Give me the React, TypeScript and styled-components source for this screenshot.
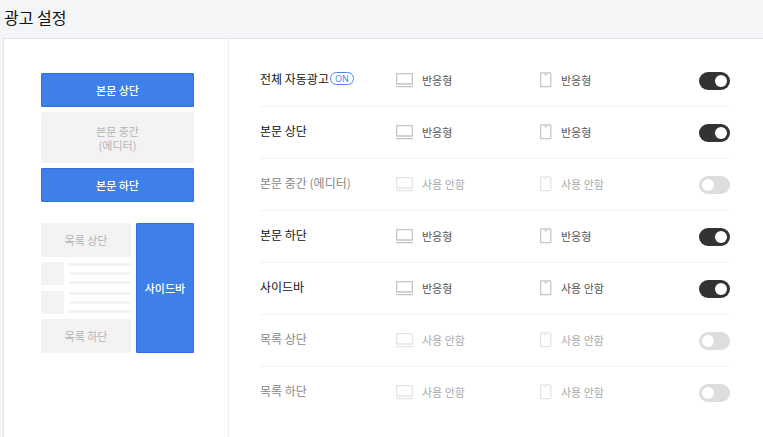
import React, { useState } from "react";
import styled, { createGlobalStyle } from "styled-components";

const GlobalStyle = createGlobalStyle`
  *, *::before, *::after { box-sizing: border-box; }
  body {
    margin: 0;
    background: #f3f5f7;
    color: #111;
    font-family: "Noto Sans CJK KR", "Noto Sans", sans-serif;
  }
`;

const Page = styled.div`
  min-height: 100vh;
  display: flex;
  flex-direction: column;
`;

const Title = styled.h1`
  margin: 0;
  padding: 5px 4px 9px;
  font-size: 16px;
  line-height: 24px;
  font-weight: 400;
`;

const Panel = styled.main`
  flex: 1;
  display: flex;
  margin-left: 3px;
  background: #fff;
  border-top: 1px solid #e1e5eb;
  border-left: 1px solid #e1e5eb;
`;

const Preview = styled.aside`
  flex: none;
  width: 225px;
  padding: 34px 34px 34px 37px;
  border-right: 1px solid #eceef2;
`;

const Stack = styled.div`
  display: flex;
  flex-direction: column;
  justify-content: space-between;
  gap: 5px;
`;

const Slot = styled.div<{ $active?: boolean; $tall?: boolean }>`
  display: flex;
  flex-direction: column;
  align-items: center;
  justify-content: center;
  text-align: center;
  min-height: ${(p) => (p.$tall ? 51 : 34)}px;
  border-radius: 1px;
  border: 1px solid ${(p) => (p.$active ? "#2c70e4" : "#f3f3f3")};
  background: ${(p) => (p.$active ? "#3f7fea" : "#f3f3f3")};
  color: ${(p) => (p.$active ? "#fff" : "#b3b3b3")};
  font-size: 11px;
  line-height: 14px;
  font-weight: ${(p) => (p.$active ? 500 : 400)};
`;

const ListPreview = styled.div`
  display: grid;
  grid-template-columns: 1fr 58px;
  gap: 5px;
  min-height: 130px;
  margin-top: 21px;
`;

const Post = styled.div`
  display: flex;
  gap: 5px;
`;

const Thumb = styled.div`
  width: 23px;
  height: 23px;
  background: #f3f3f3;
  border-radius: 1px;
`;

const Lines = styled.div`
  flex: 1;
  display: flex;
  flex-direction: column;
  gap: 6px;
  padding-top: 1px;
`;

const Line = styled.div`
  height: 3px;
  background: #f3f3f3;
`;

const Settings = styled.ul`
  flex: 1;
  margin: 0;
  padding: 16px 33px 16px 31px;
  list-style: none;
`;

const Row = styled.li`
  display: grid;
  grid-template-columns: 136px 144px 1fr auto;
  align-items: center;
  min-height: 52px;
  border-bottom: 1px solid #f3f3f3;
  &:last-child { border-bottom-color: transparent; }
`;

const Name = styled.label<{ $on: boolean }>`
  display: flex;
  align-items: center;
  gap: 1px;
  padding-bottom: 4px;
  font-size: 12px;
  line-height: 18px;
  color: ${(p) => (p.$on ? "#111" : "#888")};
`;

const Badge = styled.span`
  padding: 0 4px;
  border: 1px solid #4a86ee;
  border-radius: 7px;
  color: #3f7fea;
  font-family: "Open Sans", sans-serif;
  font-size: 9px;
  line-height: 11px;
`;

const Device = styled.div<{ $on: boolean }>`
  display: flex;
  align-items: center;
  gap: 9px;
  padding-bottom: 2px;
  font-size: 11px;
  line-height: 16px;
  color: ${(p) => (p.$on ? "#555" : "#aaa")};
  svg { color: ${(p) => (p.$on ? "#c4c4c4" : "#e4e4e4")}; }
`;

const Toggle = styled.input`
  appearance: none;
  display: block;
  width: 31px;
  height: 18px;
  margin: 0;
  padding: 3px;
  border-radius: 9px;
  background: #ddd;
  cursor: pointer;
  &::before {
    content: "";
    display: block;
    width: 12px;
    height: 12px;
    border-radius: 50%;
    background: #fff;
  }
  &:checked { background: #333; }
  &:checked::before { margin-left: auto; }
`;

const DesktopIcon = () => (
  <svg width="17" height="16" viewBox="0 0 17 16" fill="none" stroke="currentColor" strokeWidth="1.3" aria-hidden="true">
    <rect x="0.6" y="1.6" width="15.8" height="10.4" rx="0.5" />
    <path d="M0 14.6h17" />
  </svg>
);

const MobileIcon = () => (
  <svg width="12" height="16" viewBox="0 0 12 16" fill="none" stroke="currentColor" strokeWidth="1.2" aria-hidden="true">
    <rect x="0.6" y="0.9" width="10.2" height="13.8" rx="0.8" />
    <path d="M4.3 2.5h2.8" />
  </svg>
);

type Setting = { id: string; name: string; on: boolean; desktop: string; mobile: string; badge?: boolean };

const initial: Setting[] = [
  { id: "auto", name: "전체 자동광고", on: true, desktop: "반응형", mobile: "반응형", badge: true },
  { id: "body-top", name: "본문 상단", on: true, desktop: "반응형", mobile: "반응형" },
  { id: "body-mid", name: "본문 중간 (에디터)", on: false, desktop: "사용 안함", mobile: "사용 안함" },
  { id: "body-bottom", name: "본문 하단", on: true, desktop: "반응형", mobile: "반응형" },
  { id: "sidebar", name: "사이드바", on: true, desktop: "반응형", mobile: "사용 안함" },
  { id: "list-top", name: "목록 상단", on: false, desktop: "사용 안함", mobile: "사용 안함" },
  { id: "list-bottom", name: "목록 하단", on: false, desktop: "사용 안함", mobile: "사용 안함" },
];

const PostPreview = () => (
  <Post>
    <Thumb />
    <Lines>
      <Line />
      <Line />
      <Line />
    </Lines>
  </Post>
);

export default function App() {
  const [settings, setSettings] = useState(initial);
  const isOn = (id: string) => settings.some((s) => s.id === id && s.on);
  const toggle = (id: string) =>
    setSettings((all) => all.map((s) => (s.id === id ? { ...s, on: !s.on } : s)));

  return (
    <Page>
      <GlobalStyle />
      <Title>광고 설정</Title>
      <Panel>
        <Preview>
          <Stack>
            <Slot $active={isOn("body-top")}>본문 상단</Slot>
            <Slot $active={isOn("body-mid")} $tall>
              <span>본문 중간</span>
              <span>(에디터)</span>
            </Slot>
            <Slot $active={isOn("body-bottom")}>본문 하단</Slot>
          </Stack>
          <ListPreview>
            <Stack>
              <Slot $active={isOn("list-top")}>목록 상단</Slot>
              <PostPreview />
              <PostPreview />
              <Slot $active={isOn("list-bottom")}>목록 하단</Slot>
            </Stack>
            <Slot $active={isOn("sidebar")}>사이드바</Slot>
          </ListPreview>
        </Preview>
        <Settings>
          {settings.map((s) => (
            <Row key={s.id}>
              <Name htmlFor={s.id} $on={s.on}>
                {s.name}
                {s.badge && <Badge>ON</Badge>}
              </Name>
              <Device $on={s.on}>
                <DesktopIcon />
                {s.desktop}
              </Device>
              <Device $on={s.on}>
                <MobileIcon />
                {s.mobile}
              </Device>
              <Toggle id={s.id} type="checkbox" role="switch" checked={s.on} onChange={() => toggle(s.id)} />
            </Row>
          ))}
        </Settings>
      </Panel>
    </Page>
  );
}
